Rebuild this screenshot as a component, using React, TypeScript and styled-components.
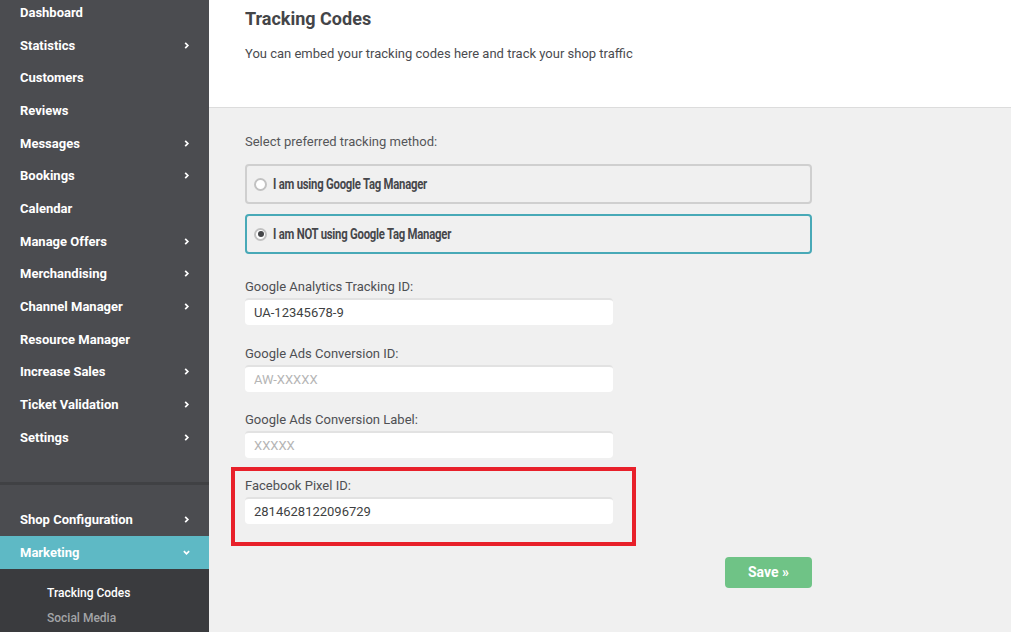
import styled, { createGlobalStyle } from 'styled-components'

const GlobalStyle = createGlobalStyle`
  html, body {
    margin: 0;
    padding: 0;
    height: 100%;
    overflow: hidden;
  }
  body {
    font-family: Roboto, "Liberation Sans", Arial, sans-serif;
    background: #f0f0f0;
  }
  #root {
    height: 100%;
  }
`

const Layout = styled.div`
  display: flex;
  width: 1011px;
  height: 632px;
  overflow: hidden;
`

const Sidebar = styled.aside`
  width: 209px;
  flex-shrink: 0;
  background: #4b4c50;
  display: flex;
  flex-direction: column;
  overflow: hidden;
`

const NavList = styled.div`
  margin-top: -4px;
  display: flex;
  flex-direction: column;
`

const NavItem = styled.div<{ $active?: boolean }>`
  height: 32.7px;
  flex-shrink: 0;
  display: flex;
  align-items: center;
  justify-content: space-between;
  padding: 0 19px 0 20px;
  font-size: 13px;
  font-weight: 700;
  color: #ffffff;
  background: ${(p) => (p.$active ? '#5eb9c5' : 'transparent')};
`

const Chevron = styled.svg`
  width: 7px;
  height: 7px;
  fill: none;
  stroke: #ffffff;
  stroke-width: 2;
`

const Divider = styled.div`
  height: 3px;
  background: #404144;
  margin: 28px 0 19px;
`

const SubMenu = styled.div`
  flex: 1;
  background: #3a3b3e;
  padding-top: 11px;
  display: flex;
  flex-direction: column;
`

const SubItem = styled.div<{ $current?: boolean }>`
  height: 25px;
  display: flex;
  align-items: center;
  padding-left: 47px;
  font-size: 12px;
  font-weight: 500;
  color: ${(p) => (p.$current ? '#ffffff' : '#a3a4a7')};
`

const Main = styled.main`
  flex: 1;
  display: flex;
  flex-direction: column;
  background: #f0f0f0;
`

const Header = styled.header`
  height: 108px;
  background: #ffffff;
  border-bottom: 1px solid #dcdcdc;
  padding: 8px 36px 0;
  box-sizing: border-box;
  flex-shrink: 0;
`

const Title = styled.h1`
  margin: 0;
  font-size: 18px;
  font-weight: 700;
  color: #444548;
  line-height: 22px;
`

const Subtitle = styled.p`
  margin: 15px 0 0;
  font-size: 13px;
  color: #4a4b4f;
  line-height: 18px;
`

const Body = styled.section`
  padding: 25px 0 0 36px;
  width: 567px;
  display: flex;
  flex-direction: column;
`

const Prompt = styled.div`
  font-size: 13px;
  color: #555659;
  line-height: 18px;
  margin-bottom: 13px;
`

const RadioBox = styled.div<{ $checked?: boolean }>`
  height: 40px;
  box-sizing: border-box;
  border: 2px solid ${(p) => (p.$checked ? '#48a9b7' : '#cfcfcf')};
  border-radius: 4px;
  display: flex;
  align-items: center;
  gap: 6px;
  padding-left: 7px;
  margin-bottom: 10px;
  overflow: hidden;
`

const RadioText = styled.span`
  font-size: 14px;
  font-weight: 700;
  letter-spacing: -0.3px;
  color: #46474b;
  white-space: nowrap;
  transform: scaleX(0.81);
  transform-origin: left center;
`

const RadioDot = styled.span<{ $checked?: boolean }>`
  width: 13px;
  height: 13px;
  flex-shrink: 0;
  box-sizing: border-box;
  border-radius: 50%;
  border: 2px solid #c2c2c2;
  background: #ffffff;
  display: flex;
  align-items: center;
  justify-content: center;

  &::after {
    content: '';
    width: 6px;
    height: 6px;
    border-radius: 50%;
    background: ${(p) => (p.$checked ? '#454649' : 'transparent')};
  }
`

const Fields = styled.div`
  margin-top: 15px;
  display: flex;
  flex-direction: column;
`

const Field = styled.div`
  display: flex;
  flex-direction: column;
  margin-bottom: 20.5px;
`

const Highlight = styled.div`
  margin: -12px 0 0 -14px;
  width: 405px;
  box-sizing: border-box;
  border: 4px solid #e8202a;
  padding: 7px 0 0 10px;
  height: 79px;
  display: flex;
  flex-direction: column;
`

const Label = styled.label`
  font-size: 13px;
  color: #4e4f53;
  line-height: 16px;
  margin-bottom: 3px;
`

const Input = styled.input`
  width: 368px;
  height: 27px;
  box-sizing: border-box;
  border: none;
  border-top: 2px solid #e2e2e2;
  border-radius: 4px;
  background: #ffffff;
  padding: 0 9px;
  font-family: Roboto, "Liberation Sans", Arial, sans-serif;
  font-size: 13px;
  color: #3e3f42;
  outline: none;

  &::placeholder {
    color: #b5b5b5;
  }
`

const Actions = styled.div`
  display: flex;
  justify-content: flex-end;
  margin-top: 11px;
`

const SaveButton = styled.button`
  width: 87px;
  height: 31px;
  border: none;
  border-radius: 4px;
  background: #6fc386;
  color: #ffffff;
  font-family: Roboto, "Liberation Sans", Arial, sans-serif;
  font-size: 14px;
  font-weight: 700;
  cursor: pointer;
`

const right = (
  <Chevron viewBox="0 0 8 8">
    <path d="M2.5 1 L5.5 4 L2.5 7" />
  </Chevron>
)

const down = (
  <Chevron viewBox="0 0 8 8">
    <path d="M1 2.5 L4 5.5 L7 2.5" />
  </Chevron>
)

const menu: [string, boolean][] = [
  ['Dashboard', false],
  ['Statistics', true],
  ['Customers', false],
  ['Reviews', false],
  ['Messages', true],
  ['Bookings', true],
  ['Calendar', false],
  ['Manage Offers', true],
  ['Merchandising', true],
  ['Channel Manager', true],
  ['Resource Manager', false],
  ['Increase Sales', true],
  ['Ticket Validation', true],
  ['Settings', true],
]

const fields = [
  { label: 'Google Analytics Tracking ID:', value: 'UA-12345678-9', placeholder: '' },
  { label: 'Google Ads Conversion ID:', value: '', placeholder: 'AW-XXXXX' },
  { label: 'Google Ads Conversion Label:', value: '', placeholder: 'XXXXX' },
]

const App = () => {
  return (
    <Layout>
      <GlobalStyle />
      <Sidebar>
        <NavList>
          {menu.map(([name, sub]) => (
            <NavItem key={name}>
              {name}
              {sub && right}
            </NavItem>
          ))}
        </NavList>
        <Divider />
        <NavItem>
          Shop Configuration
          {right}
        </NavItem>
        <NavItem $active>
          Marketing
          {down}
        </NavItem>
        <SubMenu>
          <SubItem $current>Tracking Codes</SubItem>
          <SubItem>Social Media</SubItem>
        </SubMenu>
      </Sidebar>
      <Main>
        <Header>
          <Title>Tracking Codes</Title>
          <Subtitle>You can embed your tracking codes here and track your shop traffic</Subtitle>
        </Header>
        <Body>
          <Prompt>Select preferred tracking method:</Prompt>
          <RadioBox>
            <RadioDot />
            <RadioText>I am using Google Tag Manager</RadioText>
          </RadioBox>
          <RadioBox $checked>
            <RadioDot $checked />
            <RadioText>I am NOT using Google Tag Manager</RadioText>
          </RadioBox>
          <Fields>
            {fields.map((f) => (
              <Field key={f.label}>
                <Label>{f.label}</Label>
                <Input defaultValue={f.value} placeholder={f.placeholder} />
              </Field>
            ))}
            <Highlight>
              <Label>Facebook Pixel ID:</Label>
              <Input defaultValue="2814628122096729" />
            </Highlight>
          </Fields>
          <Actions>
            <SaveButton>Save »</SaveButton>
          </Actions>
        </Body>
      </Main>
    </Layout>
  )
}

export default App
